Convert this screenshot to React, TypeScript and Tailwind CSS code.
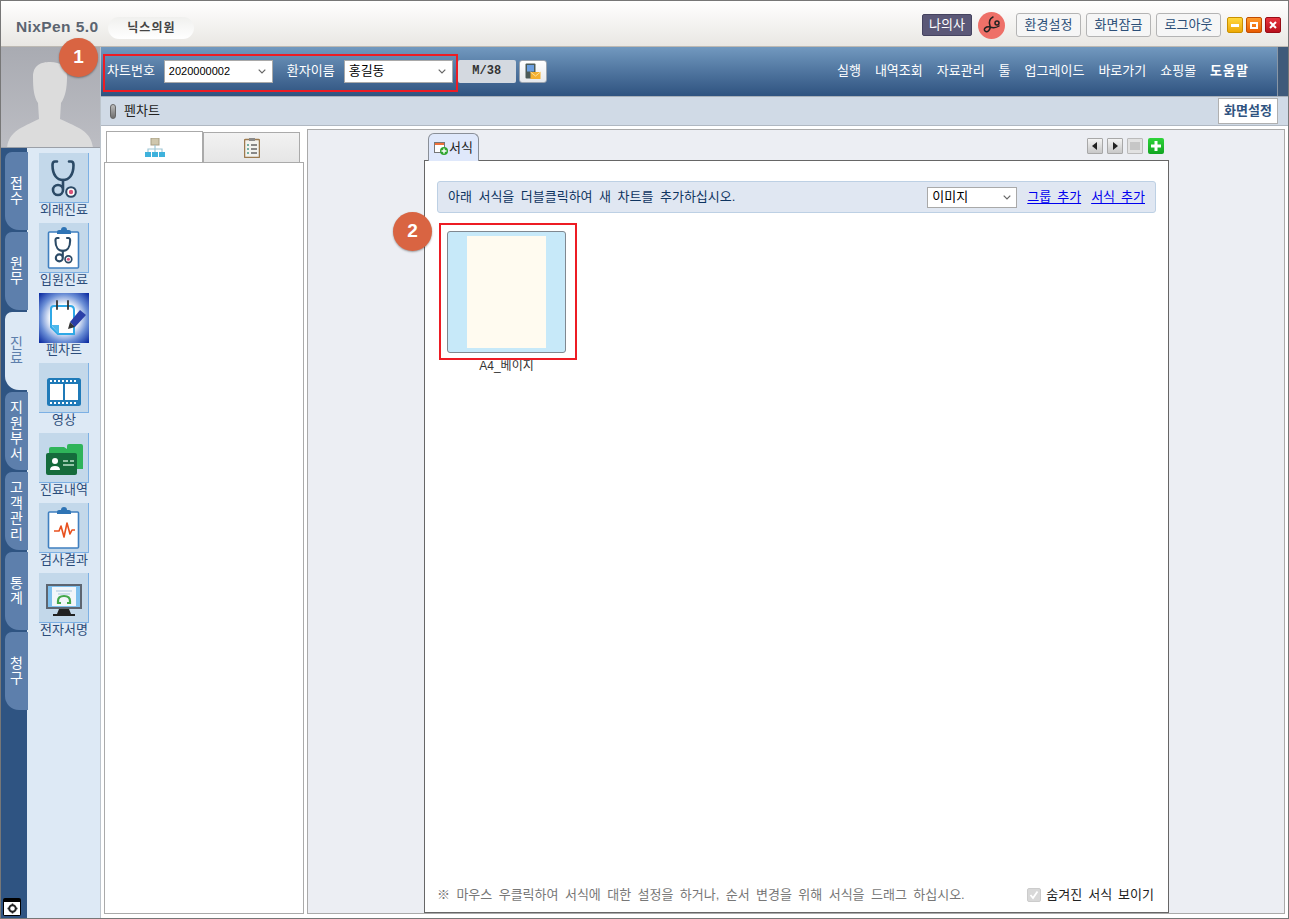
import React from "react";

const Steth = ({ c = "#2b4a66", w = 2.6 }: { c?: string; w?: number }) => (
  <g fill="none" stroke={c} strokeWidth={w} strokeLinecap="round">
    <path d="M18 8.5 H16 Q13.5 8.5 13.5 12 C13.5 22 18 27 24 27 C30 27 34.5 22 34.5 12 Q34.5 8.5 32 8.5 H30" />
    <path d="M24 27 V37 a5 5 0 0 1 -10 0 a5 5 0 0 1 10 0" />
    <circle cx="32" cy="39" r="4.8" fill="#fff" strokeWidth={w * 0.8} />
    <circle cx="32" cy="39" r="2.2" fill="#d9527a" stroke="none" />
  </g>
);

const Clip = ({ children }: { children?: React.ReactNode }) => (
  <>
    <rect x="9.5" y="9" width="30" height="36" rx="1" fill="#fff" stroke="#3f7fc0" strokeWidth="1.6" />
    <path d="M18 9 a2 2 0 0 1 2 -2 h2 a3 3 0 0 1 6 0 h2 a2 2 0 0 1 2 2 v2 h-14 z" fill="#2f74b5" />
    {children}
  </>
);

const icons: Record<string, React.ReactNode> = {
  a: <Steth />,
  b: (
    <Clip>
      <g transform="translate(7 9) scale(.7)">
        <Steth w={3} />
      </g>
    </Clip>
  ),
  c: (
    <>
      <defs>
        <radialGradient id="pg" cx="0.5" cy="0.5" r="0.68">
          <stop offset="0.4" stopColor="#ffffff" />
          <stop offset="0.7" stopColor="#6b8fd6" />
          <stop offset="1" stopColor="#0f2fa3" />
        </radialGradient>
      </defs>
      <rect width="50" height="50" fill="url(#pg)" />
      <path d="M15 13 H31 Q35 13 35 17 V41 H19 L12 34 V16 Q12 13 15 13 Z" fill="#fff" stroke="#2fa8e6" strokeWidth="2" />
      <path d="M12 32 H20 V41 Z" fill="#4cb8ec" />
      <path d="M18 8 V16 M29 8 V16" stroke="#333" strokeWidth="1.8" strokeLinecap="round" />
      <path d="M31 29 L41 17 L47 22 L36 34 Z" fill="#2b3fa8" />
      <path d="M31 29 L36 34 L29 36 Z" fill="#333" />
    </>
  ),
  d: (
    <>
      <rect x="8" y="15" width="34" height="28" rx="2.5" fill="#1f7ab8" />
      <rect x="11" y="21" width="13" height="16" fill="#fff" />
      <rect x="26" y="21" width="13" height="16" fill="#fff" />
      <path d="M11 18 h2 M15 18 h2 M19 18 h2 M23 18 h2 M27 18 h2 M31 18 h2 M35 18 h2 M11 40 h2 M15 40 h2 M19 40 h2 M23 40 h2 M27 40 h2 M31 40 h2 M35 40 h2" stroke="#fff" strokeWidth="2" />
    </>
  ),
  e: (
    <>
      <path d="M10 16 Q10 14 12 14 H25 L28 16 V13 Q28 11 30 11 H42 Q44 11 44 13 V36 H10 Z" fill="#2fb45a" />
      <rect x="7" y="20" width="31" height="22" rx="2" fill="#156b3c" />
      <circle cx="16" cy="28" r="3" fill="#fff" />
      <path d="M11 37 Q11 33 16 33 Q21 33 21 37 Z" fill="#fff" />
      <path d="M24 28 H29 M31 28 H35 M24 32 H35" stroke="#bfe4cd" strokeWidth="1.6" />
    </>
  ),
  f: (
    <Clip>
      <path d="M15 28 H20 L22 23 L25 34 L28 20 L31 31 L33 27 H36" fill="none" stroke="#e8501e" strokeWidth="1.6" strokeLinejoin="round" />
    </Clip>
  ),
  g: (
    <>
      <rect x="7" y="11" width="36" height="25" fill="#5d6570" />
      <rect x="9" y="13" width="32" height="21" fill="#7fc0ee" />
      <rect x="13" y="14" width="24" height="19" fill="#f2f6fa" />
      <path d="M17 18 H33 M19 21 H31" stroke="#a9c6de" strokeWidth="1" />
      <path d="M19 31 V28 Q19 23 25 23 Q31 23 31 28 V31 M19 30 H22 M28 30 H31" fill="none" stroke="#43a84a" strokeWidth="2.2" />
      <path d="M20 36 H30 L32 41 H18 Z" fill="#222" />
      <rect x="14" y="41" width="22" height="2" fill="#222" />
    </>
  ),
};

const side = [
  ["a", "외래진료"],
  ["b", "입원진료"],
  ["c", "펜차트"],
  ["d", "영상"],
  ["e", "진료내역"],
  ["f", "검사결과"],
  ["g", "전자서명"],
];

const tabs = ["접수", "원무", "진료", "지원부서", "고객관리", "통계", "청구"];
const menu = ["실행", "내역조회", "자료관리", "툴", "업그레이드", "바로가기", "쇼핑몰"];

const Chevron = () => (
  <svg width="8" height="5" viewBox="0 0 8 5" className="shrink-0">
    <path d="M0.7 0.7 L4 4 L7.3 0.7" fill="none" stroke="#666" strokeWidth="1.2" />
  </svg>
);

const Select = ({ value, w, t }: { value: string; w: string; t: string }) => (
  <div className={`${w} h-[23px] bg-white border border-[#a9a9a9] flex items-center justify-between pl-[4px] pr-[6px] ${t} text-black`}>
    <span>{value}</span>
    <Chevron />
  </div>
);

const TopBtn = ({ t }: { t: string }) => (
  <div className="w-[65px] h-[24px] border border-[#b4b4b4] rounded-[3px] bg-[#f6f6f6] flex items-center justify-center text-[13px] text-[#2c4f78]">{t}</div>
);

const WinBtn = ({ bg, children }: { bg: string; children: React.ReactNode }) => (
  <div className={`w-[16px] h-[16px] rounded-[2px] flex items-center justify-center border ${bg}`}>{children}</div>
);

const Badge = ({ n, cls }: { n: string; cls: string }) => (
  <div className={`absolute ${cls} w-[39px] h-[39px] rounded-full bg-[#d96442] text-white text-[19px] font-bold flex items-center justify-center shadow-[0_1px_2px_rgba(0,0,0,0.35)]`}>{n}</div>
);

const SmallBtn = ({ children, cls = "" }: { children: React.ReactNode; cls?: string }) => (
  <div className={`w-[16px] h-[16px] border border-[#a8a8a8] rounded-[1px] flex items-center justify-center ${cls}`}>{children}</div>
);

export default function App() {
  return (
    <div className="relative w-[1289px] h-[919px] box-border overflow-hidden border border-[#777] bg-white flex flex-col font-['Liberation_Sans','Noto_Sans_CJK_KR',sans-serif] text-[13px]">
      {/* title bar */}
      <div className="h-[46px] shrink-0 flex items-center pl-[15px] pr-[7px] bg-gradient-to-b from-white to-[#e9e7e3] border-b border-[#bdb9b3]">
        <span className="text-[15.5px] font-bold text-[#5b6470] mt-[7px] tracking-[0.4px]">NixPen 5.0</span>
        <div className="ml-[10px] mt-[9px] w-[86px] h-[22px] rounded-full bg-gradient-to-b from-[#f0f0ee] to-white flex items-center justify-center text-[12px] font-bold text-[#444] tracking-[1px]">닉스의원</div>
        <div className="ml-auto mt-[3px] flex items-center">
          <div className="w-[50px] h-[22px] bg-[#5b5877] border border-[#45435f] rounded-[2px] text-white flex items-center justify-center">나의사</div>
          <div className="ml-[6px] w-[27px] h-[27px] rounded-full bg-[#ee7068] flex items-center justify-center">
            <svg width="20" height="20" viewBox="0 0 20 20" fill="none" stroke="#222" strokeWidth="1.5" strokeLinecap="round">
              <path d="M11 2 C7 4 7 8 8 11 C9 15 5 18 3 16 C1 14 4 11 8 12 C11 13 14 13 17 11" />
              <circle cx="15" cy="8" r="2" />
            </svg>
          </div>
          <div className="ml-[11px] flex gap-[5px]">
            <TopBtn t="환경설정" />
            <TopBtn t="화면잠금" />
            <TopBtn t="로그아웃" />
          </div>
          <div className="ml-[6px] flex gap-[3px]">
            <WinBtn bg="bg-gradient-to-b from-[#ffd83a] to-[#eda800] border-[#c99000]">
              <div className="w-[8px] h-[3px] bg-white" />
            </WinBtn>
            <WinBtn bg="bg-gradient-to-b from-[#ff9a2a] to-[#e85a00] border-[#c04c00]">
              <div className="w-[8px] h-[7px] border-2 border-white" />
            </WinBtn>
            <WinBtn bg="bg-gradient-to-b from-[#e8323c] to-[#b8101c] border-[#980c16]">
              <svg width="8" height="8" viewBox="0 0 8 8">
                <path d="M1 1 L7 7 M7 1 L1 7" stroke="#fff" strokeWidth="2" />
              </svg>
            </WinBtn>
          </div>
        </div>
      </div>

      <div className="flex-1 flex min-h-0">
        {/* sidebar */}
        <div className="w-[100px] shrink-0 flex flex-col bg-[#dde9f5] border-r border-[#bcc4cc]">
          <div className="h-[101px] shrink-0 bg-gradient-to-b from-[#a9abb2] to-[#bcbdc3] overflow-hidden border-b border-[#9ba0a8]">
            <svg width="100" height="101" viewBox="0 0 100 101">
              <path d="M32 30 C32 18 40 15 49 15 C60 15 66 20 66 30 C66 42 64 50 60 56 L59 72 C78 81 90 84 92 101 H6 C8 84 20 81 38 72 L37 56 C33 50 32 42 32 30 Z" fill="#dcdcdc" />
            </svg>
          </div>
          <div className="flex-1 flex min-h-0 relative">
            <div className="w-[26px] shrink-0 bg-[#2f5482] pl-[4px] pt-[4px] flex flex-col gap-[2px]">
              {tabs.map((t) => (
                <div
                  key={t}
                  className={`w-[23px] h-[78px] shrink-0 rounded-tl-[7px] rounded-bl-[14px] flex flex-col items-center justify-center text-[14px] leading-[15.5px] ${t === "진료" ? "bg-[#dde9f5] text-[#5d7fac]" : "bg-[#5d7fac] text-white"}`}
                >
                  {t.split("").map((c, i) => (
                    <span key={i}>{c}</span>
                  ))}
                </div>
              ))}
            </div>
            <div className="flex-1 pl-[12px] pt-[5px] flex flex-col">
              {side.map(([k, l]) => (
                <div key={k} className="h-[70px] w-[50px] shrink-0 flex flex-col items-center">
                  <div className={`w-[50px] h-[50px] shrink-0 ${k === "c" ? "" : "bg-[#c3d8ea] border-r border-b border-[#7cb0e4]"}`}>
                    <svg width="50" height="50" viewBox="0 0 50 50">{icons[k]}</svg>
                  </div>
                  <div className="text-[13px] leading-[13px] text-[#2b4c7a] whitespace-nowrap">{l}</div>
                </div>
              ))}
            </div>
            <div className="absolute left-[2px] bottom-[2px] w-[18px] h-[18px] rounded-[2px] bg-black flex items-end justify-center pb-[1px]">
              <div className="w-[16px] h-[13px] bg-white flex items-center justify-center">
                <svg width="11" height="11" viewBox="0 0 11 11">
                  <circle cx="5.5" cy="5.5" r="3.3" fill="none" stroke="#222" strokeWidth="2" />
                  <path d="M5.5 0.5 V2 M5.5 9 V10.5 M0.5 5.5 H2 M9 5.5 H10.5" stroke="#222" strokeWidth="1.5" />
                </svg>
              </div>
            </div>
          </div>
        </div>

        {/* right */}
        <div className="flex-1 min-w-0 flex flex-col">
          <div className="h-[50px] shrink-0 flex bg-gradient-to-b from-[#7299bf] to-[#2f5380] text-white border-b border-[#a8b0ba]">
            <div className="flex-1 flex items-center pl-[6px] pb-[1px]">
              <span>차트번호</span>
              <div className="ml-[9px]"><Select value="2020000002" w="w-[109px]" t="text-[11px]" /></div>
              <span className="ml-[14px]">환자이름</span>
              <div className="ml-[9px]"><Select value="홍길동" w="w-[109px]" t="text-[13px]" /></div>
              <div className="ml-[5px] w-[58px] h-[23px] bg-[#d4d9e0] rounded-[2px] flex items-center justify-center text-[#333] font-bold font-['Liberation_Mono',monospace] text-[12px]">M/38</div>
              <div className="ml-[3px] w-[28px] h-[23px] bg-gradient-to-b from-white to-[#e6e9ed] border border-[#9aa4b0] rounded-[3px] flex items-center justify-center">
                <svg width="16" height="16" viewBox="0 0 16 16">
                  <rect x="0.5" y="0.5" width="10" height="15" rx="1" fill="#4b5a58" />
                  <rect x="2" y="2" width="7" height="6.5" fill="#6b9fe0" />
                  <rect x="5.5" y="9" width="10" height="7" fill="#f4b030" />
                  <path d="M5.5 9 L10.5 13 L15.5 9" fill="none" stroke="#fbe09a" strokeWidth="1" />
                </svg>
              </div>
              <div className="ml-auto flex items-center gap-[14px] pr-[28px] pb-[1px]">
                {menu.map((m) => (
                  <span key={m}>{m}</span>
                ))}
                <span className="font-bold tracking-[1px]">도움말</span>
              </div>
            </div>
            <div className="w-[11px] shrink-0 bg-[#3f5a7a] border-l border-[#8a97a6]" />
          </div>

          <div className="h-[29px] shrink-0 flex items-center bg-[#d0dae6] border-b border-[#b0b8c2] pl-[9px] pr-[10px]">
            <div className="w-[6px] h-[15px] rounded-full bg-gradient-to-b from-[#bdbdbd] to-[#6f6f6f] border border-[#666]" />
            <span className="ml-[8px] text-[#222]">펜차트</span>
            <div className="ml-auto w-[60px] h-[26px] bg-white border border-[#b0b0b0] flex items-center justify-center font-bold text-[#2f5380]">화면설정</div>
          </div>

          <div className="flex-1 min-h-0 flex bg-white pl-[3px] pr-[3px] pb-[4px]">
            <div className="w-[200px] shrink-0 flex flex-col pt-[5px]">
              <div className="flex pl-[2px] h-[32px] shrink-0">
                <div className="w-[97px] h-[32px] bg-white border border-b-0 border-[#aaa] flex items-center justify-center">
                  <svg width="20" height="20" viewBox="0 0 20 20">
                    <rect x="6" y="0" width="8" height="7" fill="#cfc7ad" stroke="#a89f85" />
                    <path d="M10 7 V11 M3 14 V11 H17 V14 M10 11 V14" fill="none" stroke="#9fc7d6" strokeWidth="1.2" />
                    <rect x="0" y="14" width="6" height="5" fill="#3fb2dc" />
                    <rect x="7" y="14" width="6" height="5" fill="#3fb2dc" />
                    <rect x="14" y="14" width="6" height="5" fill="#3fb2dc" />
                  </svg>
                </div>
                <div className="w-[97px] h-[31px] mt-[1px] bg-gradient-to-b from-[#f2f2f2] to-[#e6e6e6] border border-[#aaa] flex items-center justify-center">
                  <svg width="16" height="20" viewBox="0 0 16 20">
                    <rect x="0.5" y="1.5" width="15" height="18" rx="1" fill="#f2f2ee" stroke="#9c7a4e" strokeWidth="1.5" />
                    <rect x="5" y="0" width="6" height="3" fill="#8a8a8a" />
                    <path d="M3 7 H5 M3 11 H5 M3 15 H5" stroke="#4a9a8a" strokeWidth="1.5" />
                    <path d="M7 7 H13 M7 11 H13 M7 15 H13" stroke="#666" strokeWidth="1.5" />
                  </svg>
                </div>
              </div>
              <div className="flex-1 bg-white border border-[#aaa] mt-[-1px]" />
            </div>

            <div className="flex-1 ml-[3px] mt-[3px] bg-[#eceef3] border border-[#aaa] flex flex-col pl-[116px] pr-[115px] min-w-0">
              <div className="h-[30px] shrink-0 flex items-end justify-between pl-[4px] pt-[2px]">
                <div className="w-[51px] h-[28px] rounded-t-[6px] bg-[#dfe8fb] border border-b-0 border-[#8a8f98] flex items-center pl-[5px] gap-[1px] text-[#222] relative top-[1px]">
                  <svg width="14" height="14" viewBox="0 0 14 14" className="shrink-0">
                    <rect x="0.5" y="1.5" width="10" height="10" fill="#fff" stroke="#777" />
                    <rect x="1" y="2" width="9" height="2" fill="#f0703a" />
                    <circle cx="10" cy="10" r="4" fill="#2fa52f" />
                    <path d="M10 7.5 V12.5 M7.5 10 H12.5" stroke="#fff" strokeWidth="1.4" />
                  </svg>
                  <span>서식</span>
                </div>
                <div className="flex gap-[4px] mb-[6px] mr-[5px]">
                  <SmallBtn cls="bg-gradient-to-b from-[#f4f4f4] to-[#c8c8c8]">
                    <svg width="6" height="8" viewBox="0 0 6 8"><path d="M5 0 V8 L0 4 Z" fill="#222" /></svg>
                  </SmallBtn>
                  <SmallBtn cls="bg-gradient-to-b from-[#f4f4f4] to-[#c8c8c8]">
                    <svg width="6" height="8" viewBox="0 0 6 8"><path d="M1 0 V8 L6 4 Z" fill="#222" /></svg>
                  </SmallBtn>
                  <SmallBtn cls="bg-[#e2e2e2] border-[#bbb]">
                    <svg width="10" height="8" viewBox="0 0 10 8"><path d="M0 1 H10 M0 3 H10 M0 5 H10 M0 7 H10" stroke="#aaa" /></svg>
                  </SmallBtn>
                  <div className="w-[16px] h-[16px] ml-[1px] rounded-[2px] bg-gradient-to-b from-[#2ed43a] to-[#10a520] flex items-center justify-center">
                    <svg width="10" height="10" viewBox="0 0 10 10"><path d="M5 0 V10 M0 5 H10" stroke="#fff" strokeWidth="3" /></svg>
                  </div>
                </div>
              </div>

              <div className="flex-1 min-h-0 bg-white border border-[#666] flex flex-col pl-[12px] pr-[12px] pt-[20px] pb-[8px]">
                <div className="h-[32px] shrink-0 rounded-[3px] bg-[#e0e7f2] border border-[#bdd0e4] flex items-center pl-[10px] pr-[10px] text-[#0e3460] [word-spacing:2.4px]">
                  <span className="[word-spacing:2.9px]">아래 서식을 더블클릭하여 새 차트를 추가하십시오.</span>
                  <div className="ml-auto w-[90px] h-[21px] bg-white border border-[#a9a9a9] flex items-center justify-between pl-[4px] pr-[5px] text-black">
                    <span>이미지</span>
                    <Chevron />
                  </div>
                  <span className="ml-[10px] text-[#0000ee] underline underline-offset-2">그룹 추가</span>
                  <span className="ml-[10px] text-[#0000ee] underline underline-offset-2">서식 추가</span>
                </div>

                <div className="mt-[18px] ml-[10px] w-[119px] flex flex-col items-center">
                  <div className="w-[119px] h-[122px] rounded-[3px] bg-[#c7e9f9] border border-[#808890] flex justify-center pt-[4px]">
                    <div className="w-[79px] h-[112px] bg-[#fffbf0]" />
                  </div>
                  <div className="mt-[6px] text-[12px] leading-[14px] text-[#333]">A4_베이지</div>
                </div>

                <div className="mt-auto flex items-center justify-between pr-[2px] h-[18px]">
                  <span className="text-[#777] [word-spacing:2.8px]">※ 마우스 우클릭하여 서식에 대한 설정을 하거나, 순서 변경을 위해 서식을 드래그 하십시오.</span>
                  <div className="flex items-center gap-[5px] text-[#222] [word-spacing:2.4px]">
                    <div className="w-[14px] h-[14px] rounded-[2px] bg-[#d8d8d8] border border-[#ccc] flex items-center justify-center">
                      <svg width="10" height="10" viewBox="0 0 10 10"><path d="M1.5 5 L4 8 L8.5 1.5" fill="none" stroke="#fff" strokeWidth="1.8" /></svg>
                    </div>
                    <span>숨겨진 서식 보이기</span>
                  </div>
                </div>
              </div>
            </div>
          </div>
        </div>
      </div>

      {/* annotations */}
      <div className="absolute left-[102px] top-[53px] w-[355px] h-[38px] border-2 border-[#ed1c24] pointer-events-none" />
      <div className="absolute left-[438px] top-[222px] w-[138px] h-[137px] border-2 border-[#ed1c24] pointer-events-none" />
      <Badge n="1" cls="left-[58px] top-[37px]" />
      <Badge n="2" cls="left-[392px] top-[211px]" />
    </div>
  );
}
